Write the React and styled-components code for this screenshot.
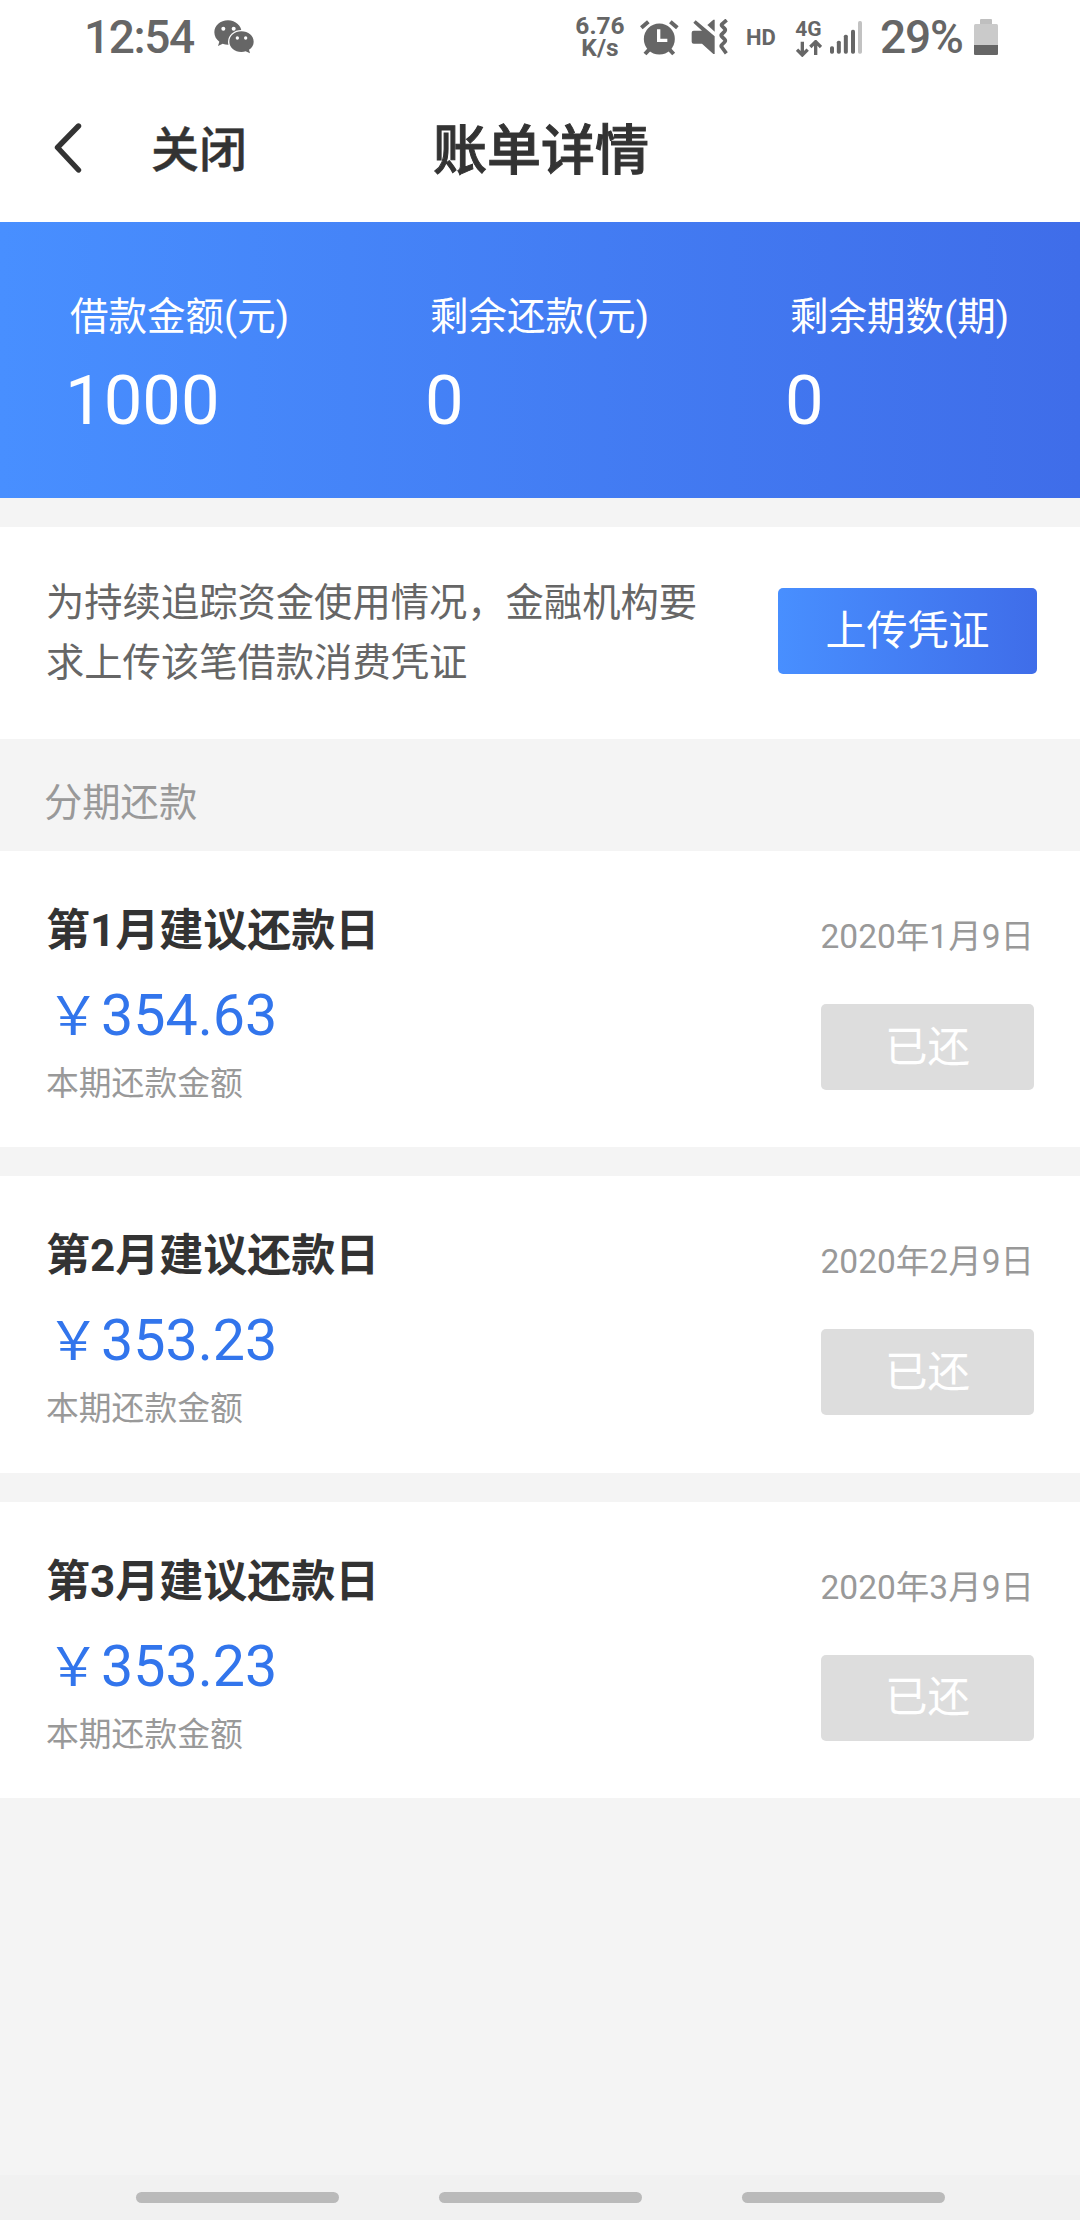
import React from 'react'
import styled, { createGlobalStyle } from 'styled-components'

const summary = [
  { label: '借款金额(元)', value: '1000' },
  { label: '剩余还款(元)', value: '0' },
  { label: '剩余期数(期)', value: '0' }
]

const bills = [
  { title: '第1月建议还款日', amount: '354.63', date: '2020年1月9日' },
  { title: '第2月建议还款日', amount: '353.23', date: '2020年2月9日' },
  { title: '第3月建议还款日', amount: '353.23', date: '2020年3月9日' }
]

const WechatIcon = () => (
  <svg width="40" height="34" viewBox="460 62 120 102">
    <path fill="#666" d="M502 63c-23 0-41 16-41 36 0 12 6 22 15 28l-4 13 14-7c5 2 11 3 16 3 23 0 41-16 41-36s-18-37-41-37z" />
    <ellipse cx="542" cy="127" rx="40" ry="35" fill="#fff" />
    <path fill="#666" d="M542 96c-20 0-36 14-36 31s16 31 36 31c5 0 9-1 13-2l13 6-3-11c9-6 14-14 14-24 0-17-16-31-37-31z" />
    <g fill="#fff">
      <circle cx="488" cy="88" r="6" />
      <circle cx="519" cy="88" r="6" />
      <circle cx="530" cy="116" r="5" />
      <circle cx="555" cy="116" r="5" />
    </g>
  </svg>
)

const AlarmIcon = () => (
  <svg width="39" height="37" viewBox="239 55 117 111">
    <circle cx="297" cy="115" r="46.5" fill="#666" />
    <path d="M243 81l21-18M351 81l-21-18" stroke="#666" strokeWidth="12" />
    <path d="M267 146l-13 14M327 146l13 14" stroke="#666" strokeWidth="12" />
    <path d="M295 86v33h26" stroke="#fff" strokeWidth="10" fill="none" />
  </svg>
)

const MuteIcon = () => (
  <svg width="37" height="36" viewBox="394 57 111 108">
    <path fill="#666" d="M408 61l57 48v53h-4l-34-31h-25q-6 0-6-6V98q0-6 6-6h25l-26-24z" />
    <path fill="#666" d="M443 75l18-16h4v36z" />
    <path d="M501 60l-14 12q-3 3 0 6l8 8q4 4 0 8l-9 9q-3 3 0 6l9 9q4 4 0 8l-9 9q-3 3 0 6l14 19" stroke="#666" strokeWidth="11" fill="none" />
  </svg>
)

const DataArrows = () => (
  <svg width="26" height="17" viewBox="45 120 78 51">
    <path d="M64 125v38M48 149l16 16 16-16M104 165v-38M88 141l16-16 16 16" stroke="#666" strokeWidth="10" fill="none" />
  </svg>
)

const SignalIcon = () => (
  <svg width="32" height="33" viewBox="150 67 96 99">
    <g fill="#666">
      <rect x="150" y="143" width="12" height="22" rx="5" />
      <rect x="170.500" y="126" width="12" height="39" rx="5" />
      <rect x="191.500" y="108" width="12" height="57" rx="5" />
      <rect x="213" y="93" width="12" height="72" rx="5" />
    </g>
    <rect x="234" y="67" width="12" height="98" rx="5" fill="#c2c2c2" />
  </svg>
)

const BatteryIcon = () => (
  <svg width="24" height="36" viewBox="0 0 24 36">
    <path fill="#bfbfbf" d="M6 1q0-1 1-1h10q1 0 1 1v5H6z" />
    <rect y="5" width="24" height="31" rx="1.500" fill="#cacaca" />
    <path fill="#666" d="M0 26h24v8.500q0 1.500-1.500 1.500h-21Q0 36 0 34.500z" />
  </svg>
)

const BackIcon = () => (
  <svg width="30" height="52" viewBox="0 0 30 52">
    <path d="M26.500 4L5.500 25.500l21 22.500" stroke="#333" strokeWidth="5.400" strokeLinecap="round" strokeLinejoin="round" fill="none" />
  </svg>
)

const App = () => {
  return (
    <Page>
      <GlobalStyle />
      <StatusBar>
        <Clock>12:54</Clock>
        <WechatIcon />
        <StatusRight>
          <Speed>
            <span>6.76</span>
            <span>K/s</span>
          </Speed>
          <AlarmIcon />
          <MuteIcon />
          <Hd>HD</Hd>
          <Network>
            <span>4G</span>
            <DataArrows />
          </Network>
          <SignalIcon />
          <Percent>29%</Percent>
          <BatteryIcon />
        </StatusRight>
      </StatusBar>
      <NavBar>
        <BackIcon />
        <Close>关闭</Close>
        <Title>账单详情</Title>
      </NavBar>
      <Summary>
        {summary.map((item) => (
          <SummaryItem key={item.label}>
            <div className="label">{item.label}</div>
            <div className="value">{item.value}</div>
          </SummaryItem>
        ))}
      </Summary>
      <Notice>
        <p>为持续追踪资金使用情况，金融机构要求上传该笔借款消费凭证</p>
        <Button $primary>上传凭证</Button>
      </Notice>
      <SectionTitle>分期还款</SectionTitle>
      <BillList>
        {bills.map((bill) => (
          <Bill key={bill.title}>
            <BillInfo>
              <div className="bill-title">{bill.title}</div>
              <div className="bill-amount"><span>￥</span>{bill.amount}</div>
              <div className="bill-desc">本期还款金额</div>
            </BillInfo>
            <BillSide>
              <div className="bill-date">{bill.date}</div>
              <Button>已还</Button>
            </BillSide>
          </Bill>
        ))}
      </BillList>
      <GestureBar>
        <i />
        <i />
        <i />
      </GestureBar>
    </Page>
  )
}

const GlobalStyle = createGlobalStyle`
  body {
    margin: 0;
    background: #f4f4f4;
  }
  * {
    box-sizing: border-box;
  }
`

const Page = styled.div`
  display: flex;
  flex-direction: column;
  width: 1080px;
  height: 2220px;
  overflow: hidden;
  background: #f4f4f4;
  font-family: Roboto, "Noto Sans CJK SC", sans-serif;
`

const StatusBar = styled.div`
  display: flex;
  align-items: center;
  height: 74px;
  padding: 0 82px 0 84px;
  background: #fff;
  color: #666;
  svg {
    flex: none;
  }
`

const Clock = styled.div`
  width: 130px;
  font-size: 46px;
  font-weight: 500;
  letter-spacing: -1.400px;
`

const StatusRight = styled.div`
  display: flex;
  align-items: center;
  gap: 12px;
  margin-left: auto;
`

const Speed = styled.div`
  display: flex;
  flex-direction: column;
  align-items: center;
  width: 52px;
  margin-right: 2px;
  font-size: 24.500px;
  font-weight: 700;
  line-height: 22px;
`

const Hd = styled.div`
  width: 32px;
  margin: 0 5px 0 6px;
  font-size: 22px;
  font-weight: 700;
`

const Network = styled.div`
  display: flex;
  flex-direction: column;
  align-items: center;
  width: 27px;
  margin-right: -4px;
  font-size: 21px;
  font-weight: 700;
  line-height: 22px;
`

const Percent = styled.div`
  width: 83px;
  margin-left: 6px;
  margin-right: -1px;
  font-size: 46px;
  font-weight: 500;
  letter-spacing: -1.200px;
`

const NavBar = styled.div`
  display: grid;
  grid-template-columns: 98px 1fr 216px 1fr 98px;
  align-items: center;
  height: 148px;
  padding: 0 52px;
  background: #fff;
  color: #333;
  font-weight: 500;
  white-space: nowrap;
`

const Close = styled.div`
  padding: 0 0 5px 1px;
  font-size: 48px;
  -webkit-text-stroke: .4px #333;
`

const Title = styled.div`
  padding: 0 0 4px 1px;
  font-size: 54px;
  -webkit-text-stroke: 1px #333;
`

const Summary = styled.div`
  display: flex;
  height: 276px;
  padding: 67px 0 0;
  background: linear-gradient(90deg, #488fff, #3f6de9);
  color: #fff;
`

const SummaryItem = styled.div`
  width: 360px;
  .label {
    padding-left: 70px;
    font-size: 38.500px;
    line-height: 56px;
  }
  .value {
    padding-left: 65px;
    font-size: 68.800px;
    line-height: 80px;
    margin-top: 16px;
  }
`

const Notice = styled.div`
  display: flex;
  align-items: flex-start;
  justify-content: space-between;
  height: 212px;
  margin-top: 29px;
  padding: 46px 43px 0 46px;
  background: #fff;
  p {
    width: 660px;
    margin: 0;
    color: #666;
    font-size: 38.300px;
    line-height: 60px;
  }
  button {
    margin-top: 15px;
  }
`

const Button = styled.button`
  width: ${(props) => (props.$primary ? '259px' : '213px')};
  height: 86px;
  padding: 0 0 8px;
  border: none;
  border-radius: 5px;
  background: ${(props) => (props.$primary ? 'linear-gradient(90deg, #488fff, #3f6de9)' : '#ddd')};
  color: #fff;
  font-family: inherit;
  font-size: ${(props) => (props.$primary ? '41px' : '42.5px')};
`

const SectionTitle = styled.div`
  height: 112px;
  padding-left: 44px;
  color: #999;
  font-size: 38.300px;
  line-height: 127px;
`

const BillList = styled.div`
  display: flex;
  flex-direction: column;
  gap: 29px;
`

const Bill = styled.div`
  display: flex;
  justify-content: space-between;
  height: 296.300px;
  padding: 0 46px;
  background: #fff;
`

const BillInfo = styled.div`
  padding-top: 48px;
  .bill-title {
    color: #333;
    font-size: 44px;
    font-weight: 700;
    line-height: 64px;
  }
  .bill-amount {
    color: #3275ec;
    font-size: 57.400px;
    line-height: 80px;
    margin: 13px 0 0 -2.500px;
  }
  .bill-amount span {
    padding: 0 1.200px 0 3.200px;
    font-size: 53px;
    line-height: 1;
  }
  .bill-desc {
    color: #999;
    font-size: 32.800px;
    line-height: 48px;
    margin-top: 4px;
  }
`

const BillSide = styled.div`
  display: flex;
  flex-direction: column;
  align-items: flex-end;
  padding-top: 61px;
  .bill-date {
    color: #999;
    font-size: 33.500px;
    line-height: 50px;
    margin-bottom: 42px;
  }
`

const GestureBar = styled.div`
  display: flex;
  justify-content: center;
  gap: 100px;
  height: 45px;
  margin-top: auto;
  padding-top: 17px;
  background: #f1f1f1;
  i {
    width: 203px;
    height: 11px;
    border-radius: 6px;
    background: #bababa;
  }
`

export default App
